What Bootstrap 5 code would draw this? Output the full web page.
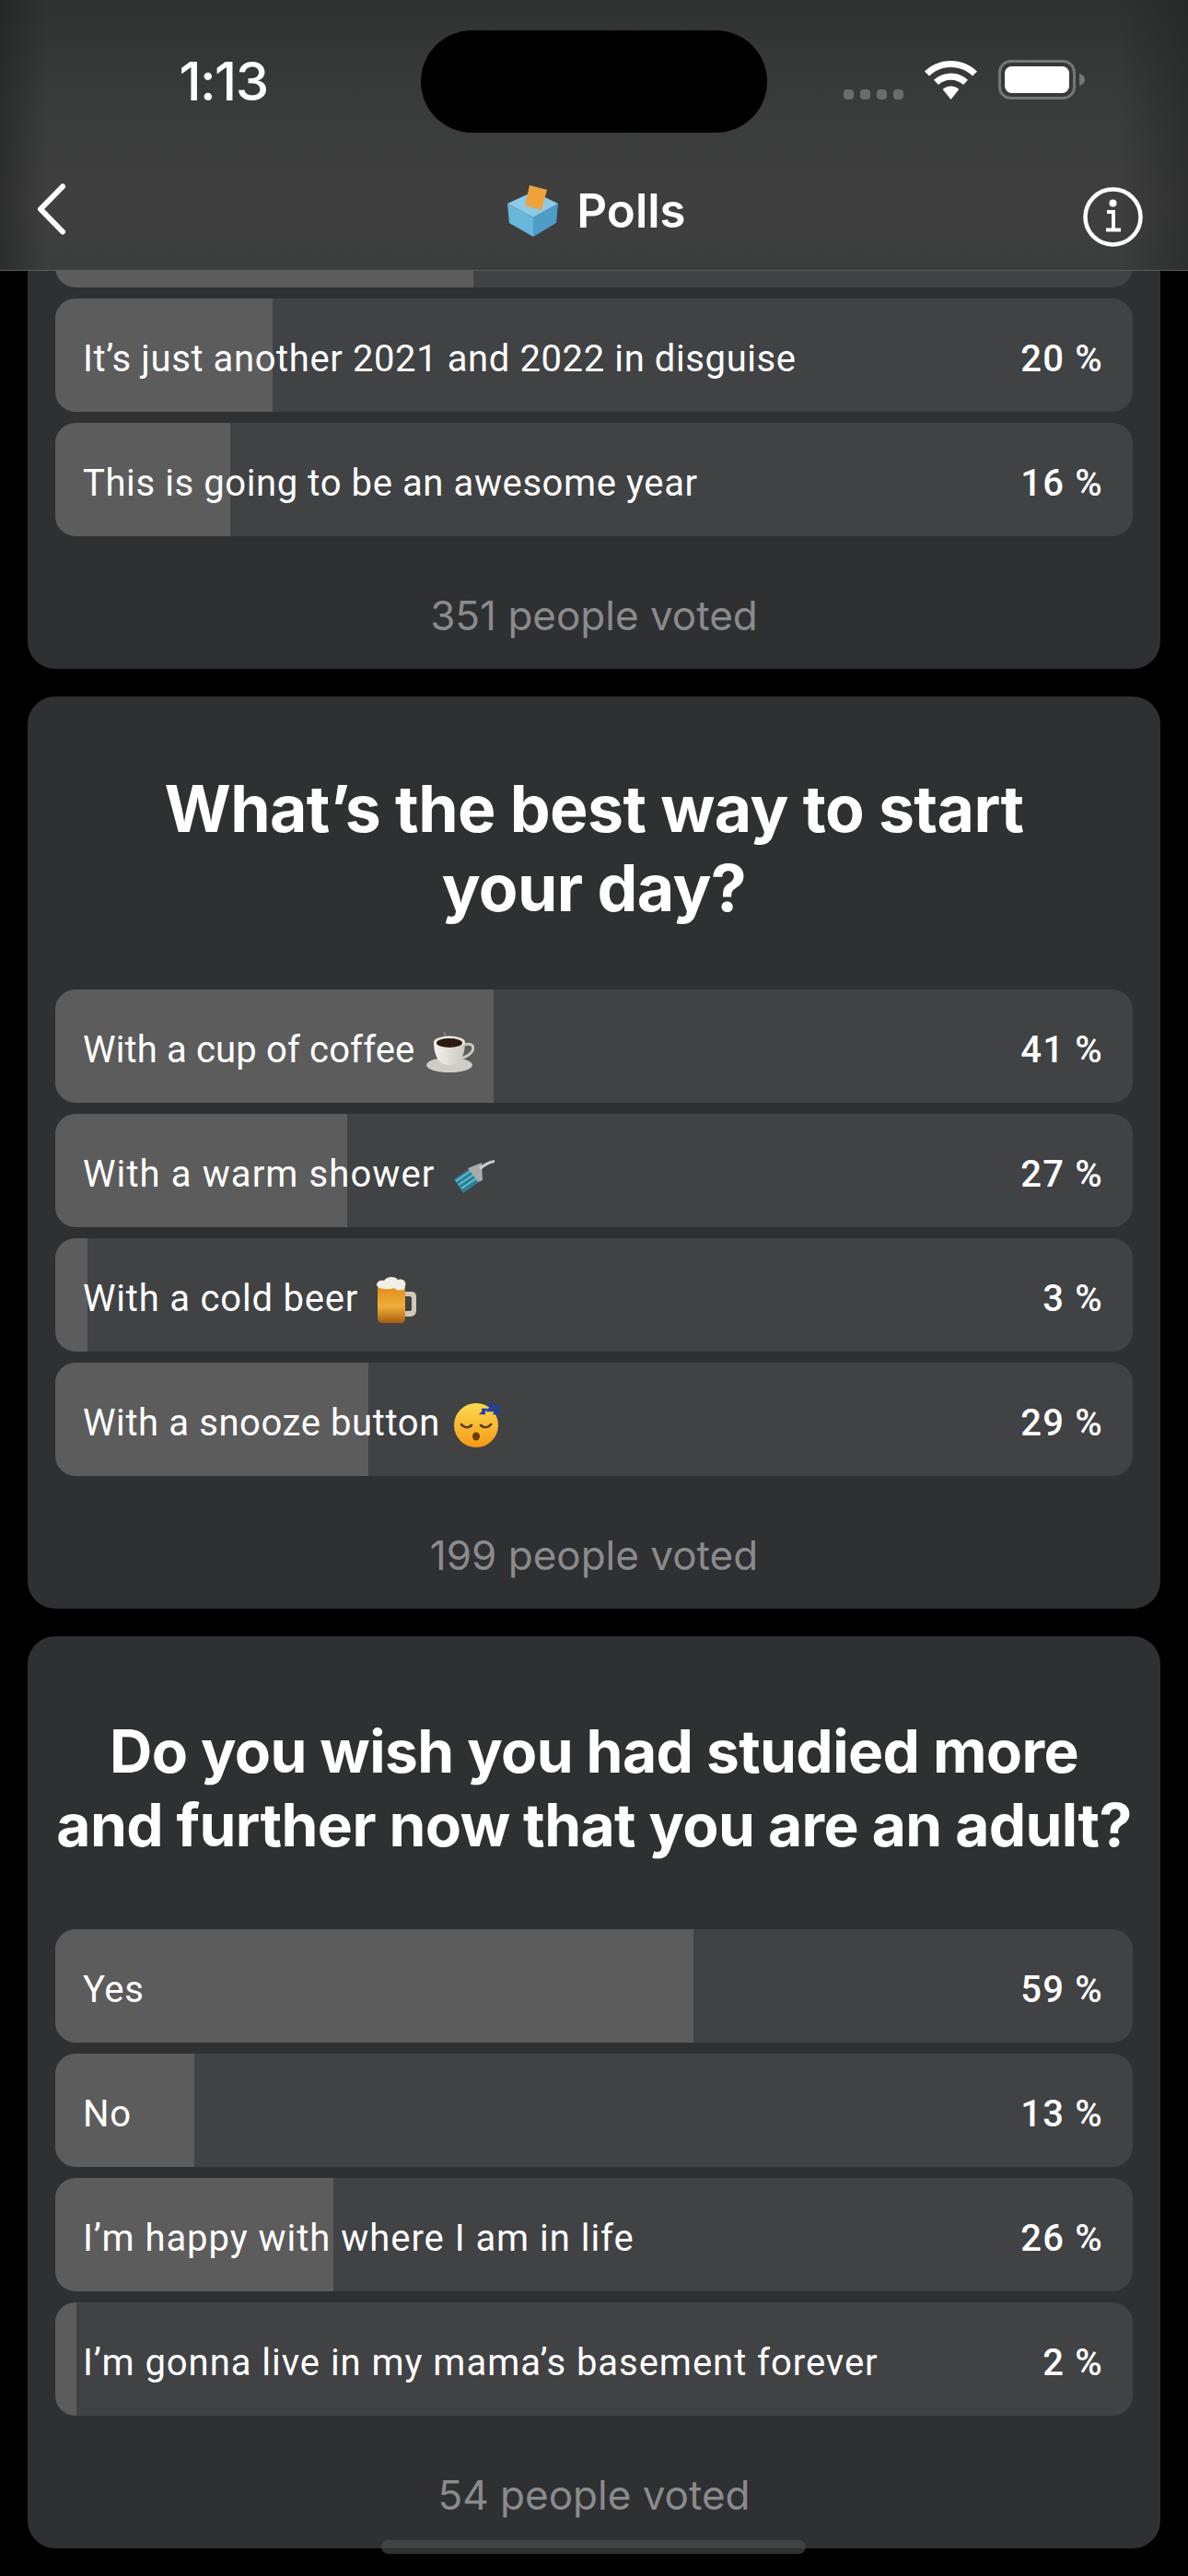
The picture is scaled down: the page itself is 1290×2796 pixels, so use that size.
<!DOCTYPE html>
<html lang="en">
<head>
<meta charset="utf-8">
<title>Polls</title>
<link rel="stylesheet" href="https://cdn.jsdelivr.net/npm/bootstrap@5.3.0/dist/css/bootstrap.min.css">
<script src="https://cdn.jsdelivr.net/npm/bootstrap@5.3.0/dist/js/bootstrap.bundle.min.js"></script>
<style>
html,body{height:2796px;overflow:hidden;background:#000;}
body{font-family:Inter,"Liberation Sans",sans-serif;color:#fff;position:relative;}
.top-shell{position:absolute;top:0;left:0;width:1290px;height:294px;z-index:5;border-bottom:1px solid #5c5d5d;
 background:linear-gradient(90deg,rgba(24,25,25,.45) 0,rgba(24,25,25,0) 4%,rgba(24,25,25,0) 94%,rgba(24,25,25,.4) 100%),linear-gradient(180deg,#303131 0,#3a3b3b 40%,#3f3f3f 75%,#3c3d3d 100%);}
.status-row{height:144px;}
.time-zone{width:457px;padding:33px 0 0 28px;text-align:center;font-size:58px;font-weight:500;line-height:110px;font-family:Inter,sans-serif;letter-spacing:-1.500px;}
.island{width:376px;height:111px;margin-top:33px;background:#000;border-radius:56px;}
.sys-zone{margin-top:65px;height:43px;padding-left:83px;gap:23px;}
.sig-dots{gap:7px;}
.sig-dots i{width:11px;height:11px;border-radius:4px;background:#6b6c6c;display:block;}
.nav-row{display:grid;grid-template-columns:1fr auto 1fr;padding:55px 49px 0 40px;}
.nav-title{font-size:51px;font-weight:600;line-height:56px;gap:18px;margin:-10px 0 0 14px;}
.info-ico{margin-top:4px;}
.feed{padding:159px 30px 0;gap:30px;}
.poll-card{background:#2e3032;border:0;border-radius:30px;padding:30px 30px 0;color:#fff;}
.poll-ask{height:288px;margin:0;padding-bottom:18px;font-family:Inter,sans-serif;font-weight:700;text-align:center;}
.ask-lg{font-size:69.700px;line-height:86px;letter-spacing:-.6px;}
.ask-md{font-size:64.100px;line-height:80px;letter-spacing:-.6px;}
.opt-stack{gap:12px;}
.opt-bar{height:123px;background:#404244;border-radius:22px;position:relative;}
.opt-bar .progress-bar{background:#5c5c5c;}
.opt-over{position:absolute;inset:0;padding:8px 32px 0 30px;font-family:Roboto,sans-serif;font-size:40px;font-weight:400;letter-spacing:.6px;color:#fff;}
.trk-narrow{letter-spacing:.15px;}
.trk-mid{letter-spacing:.8px;}
.trk-wide{letter-spacing:.97px;}
.trk-max{letter-spacing:1.1px;}
.opt-pct{font-weight:500;letter-spacing:1.2px;}
.opt-emo{margin-left:13px;vertical-align:middle;}
.vote-total{height:144px;margin:0;padding-top:56px;text-align:center;font-size:44px;line-height:60px;color:#8a8b8c;}
.home-pill{position:absolute;left:414px;top:2757px;width:461px;height:15px;background:linear-gradient(180deg,#414243 0,#414243 9px,#2f3030 9px,#2f3030 100%);border-radius:8px;z-index:3;}
</style>
</head>
<body>
<header class="top-shell">
  <div class="status-row d-flex">
    <div class="time-zone">1:13</div>
    <div class="island"></div>
    <div class="sys-zone d-flex align-items-end">
      <div class="sig-dots d-flex"><i></i><i></i><i></i><i></i></div>
      <svg width="57" height="42" viewBox="0 0 57 42"><path d="M28.5 0C17.500 0 7.500 4.200 0 11.500L5 16.500C11 10.500 19.300 7 28.500 7S46 10.500 52 16.500L57 11.500C49.500 4.200 39.500 0 28.500 0Z" fill="#fff"/><path d="M28.500 13.500C21.300 13.500 14.800 16.300 10 20.800L15 26C18.500 22.700 23.300 20.700 28.500 20.700S38.500 22.700 42 26L47 20.800C42.200 16.300 35.700 13.500 28.500 13.500Z" fill="#fff"/><path d="M28.500 27.500C25 27.500 22 28.800 19.700 31L28.500 42L37.300 31C35 28.800 32 27.500 28.500 27.500Z" fill="#fff"/></svg>
      <svg width="94" height="43" viewBox="0 0 94 43"><rect x="1.500" y="1.500" width="81" height="40" rx="12" fill="none" stroke="#757676" stroke-width="3"/><rect x="7" y="7" width="70" height="29" rx="7.500" fill="#fff"/><path d="M88 15c3.500.8 6 3.300 6 6.500s-2.500 5.700-6 6.500z" fill="#757676"/></svg>
    </div>
  </div>
  <nav class="nav-row">
    <div><svg width="32" height="56" viewBox="0 0 32 56"><path d="M28 3.500L4 28l24 24.500" fill="none" stroke="#fff" stroke-width="6" stroke-linecap="round" stroke-linejoin="round"/></svg></div>
    <div class="nav-title d-flex align-items-center">
      <svg width="58" height="58" viewBox="0 0 58 58"><path d="M1 21L29 8l27 13-27 15z" fill="#8ccbe6"/><path d="M1 21l28 15v21L3 42z" fill="#68b6da"/><path d="M56 21L29 36v21l25-15z" fill="#4e9dc6"/><path d="M25 1l19 5-6 22-18-5z" fill="#eea23a"/></svg>
      <span>Polls</span>
    </div>
    <div class="text-end"><svg class="info-ico" width="65" height="65" viewBox="0 0 65 65"><circle cx="32.500" cy="32.500" r="30" fill="none" stroke="#fff" stroke-width="4.500"/><circle cx="32.500" cy="17.500" r="4" fill="#fff"/><path d="M26 27h7v19M25 46.500h16" fill="none" stroke="#fff" stroke-width="4"/></svg></div>
  </nav>
</header>

<main class="feed d-flex flex-column">
  <section class="card poll-card">
    <div class="opt-stack d-flex flex-column">
      <div class="progress opt-bar"><div class="progress-bar" style="width:38.8%"></div></div>
      <div class="progress opt-bar"><div class="progress-bar" style="width:20.2%"></div><div class="opt-over d-flex justify-content-between align-items-center"><span>It’s just another 2021 and 2022 in disguise</span><span class="opt-pct">20 %</span></div></div>
      <div class="progress opt-bar"><div class="progress-bar" style="width:16.2%"></div><div class="opt-over d-flex justify-content-between align-items-center"><span>This is going to be an awesome year</span><span class="opt-pct">16 %</span></div></div>
    </div>
    <p class="vote-total">351 people voted</p>
  </section>

  <section class="card poll-card">
    <h2 class="poll-ask ask-lg d-flex align-items-center justify-content-center">What’s the best way to start<br>your day?</h2>
    <div class="opt-stack d-flex flex-column mt-0">
      <div class="progress opt-bar"><div class="progress-bar" style="width:40.7%"></div><div class="opt-over d-flex justify-content-between align-items-center"><span class="trk-narrow">With a cup of coffee<svg class="opt-emo" width="52" height="46" viewBox="0 0 52 46"><defs><linearGradient id="cupg" x1="0" y1="0" x2="1" y2="0"><stop offset="0" stop-color="#f4f3ec"/><stop offset="1" stop-color="#c9c8bf"/></linearGradient></defs><path d="M20 1c-2 3 3 4 1 7" fill="none" stroke="#8a8a8a" stroke-width="1.500"/><ellipse cx="25" cy="37" rx="25" ry="8" fill="#cfcec6"/><path d="M8 12c0 14 5 25 17 25s17-11 17-25z" fill="url(#cupg)"/><path d="M41 15c9-3 12 3 8 8-2 3-6 5-11 7" fill="none" stroke="#c9c8bf" stroke-width="3"/><ellipse cx="25" cy="12" rx="17" ry="6.500" fill="#e9e8df"/><ellipse cx="25" cy="13" rx="14" ry="5" fill="#2c1a12"/></svg></span><span class="opt-pct">41 %</span></div></div>
      <div class="progress opt-bar"><div class="progress-bar" style="width:27.1%"></div><div class="opt-over d-flex justify-content-between align-items-center"><span class="trk-max">With a warm shower<svg class="opt-emo" width="47" height="37" viewBox="0 0 47 37" style="margin-left:18px"><path d="M3 22L20 10l10 15-17 12z" fill="#2e7f93"/><path d="M5 24l16-11M8 28l16-11M11 32l16-11" stroke="#63c3d6" stroke-width="1.700"/><path d="M18 10L33 4l1 19-5 2z" fill="#a9aaab"/><path d="M30 9C35 5 40 2 47 1l0 3c-6 1-11 4-15 8z" fill="#c9cacb"/></svg></span><span class="opt-pct">27 %</span></div></div>
      <div class="progress opt-bar"><div class="progress-bar" style="width:3%"></div><div class="opt-over d-flex justify-content-between align-items-center"><span class="trk-mid">With a cold beer<svg class="opt-emo" width="45" height="51" viewBox="0 0 45 51" style="margin-left:19px"><defs><linearGradient id="ale" x1="0" y1="0" x2="0" y2="1"><stop offset="0" stop-color="#e08c18"/><stop offset=".55" stop-color="#f1ae3c"/><stop offset="1" stop-color="#a85e0e"/></linearGradient></defs><path d="M31 16h8c4 0 5 3 5 6v14c0 5-3 7-7 7h-6v-6h6c1 0 2-1 2-2V23c0-1-1-2-2-2h-6z" fill="#cfc9b8"/><path d="M2 10h30v35c0 3-2 5-5 5H8c-3 0-6-2-6-5z" fill="url(#ale)"/><path d="M1 9c0-5 5-6 8-5 3-5 12-5 15-1 5-2 10 2 8 7-1 3-2 5-4 4-3 1-6 0-8-2-5 2-17 2-19-3z" fill="#f1eee6"/></svg></span><span class="opt-pct">3 %</span></div></div>
      <div class="progress opt-bar"><div class="progress-bar" style="width:29.1%"></div><div class="opt-over d-flex justify-content-between align-items-center"><span>With a snooze button<svg class="opt-emo" width="50" height="49" viewBox="0 0 50 49" style="margin-left:15px"><defs><linearGradient id="fc" x1="0" y1="0" x2="0" y2="1"><stop offset="0" stop-color="#ffd94f"/><stop offset="1" stop-color="#f59a17"/></linearGradient></defs><circle cx="24" cy="25" r="24" fill="url(#fc)"/><path d="M8 24c3 4 8 4 11 1M29 25c3 3 8 3 11-1" fill="none" stroke="#5b3a10" stroke-width="2.500" stroke-linecap="round"/><ellipse cx="24" cy="37" rx="4" ry="4.500" fill="#6b3a12"/><path d="M30 8h4l-4 4h4M36 3h6l-5 6h6M43 5h6l-5 7h6" fill="none" stroke="#1f3fa8" stroke-width="2.500"/></svg></span><span class="opt-pct">29 %</span></div></div>
    </div>
    <p class="vote-total">199 people voted</p>
  </section>

  <section class="card poll-card">
    <h2 class="poll-ask ask-md d-flex align-items-center justify-content-center">Do you wish you had studied more<br>and further now that you are an adult?</h2>
    <div class="opt-stack d-flex flex-column">
      <div class="progress opt-bar"><div class="progress-bar" style="width:59.2%"></div><div class="opt-over d-flex justify-content-between align-items-center"><span>Yes</span><span class="opt-pct">59 %</span></div></div>
      <div class="progress opt-bar"><div class="progress-bar" style="width:12.9%"></div><div class="opt-over d-flex justify-content-between align-items-center"><span>No</span><span class="opt-pct">13 %</span></div></div>
      <div class="progress opt-bar"><div class="progress-bar" style="width:25.8%"></div><div class="opt-over d-flex justify-content-between align-items-center"><span class="trk-wide">I’m happy with where I am in life</span><span class="opt-pct">26 %</span></div></div>
      <div class="progress opt-bar"><div class="progress-bar" style="width:2%"></div><div class="opt-over d-flex justify-content-between align-items-center"><span class="trk-wide">I’m gonna live in my mama’s basement forever</span><span class="opt-pct">2 %</span></div></div>
    </div>
    <p class="vote-total">54 people voted</p>
  </section>
</main>
<div class="home-pill"></div>
</body>
</html>
